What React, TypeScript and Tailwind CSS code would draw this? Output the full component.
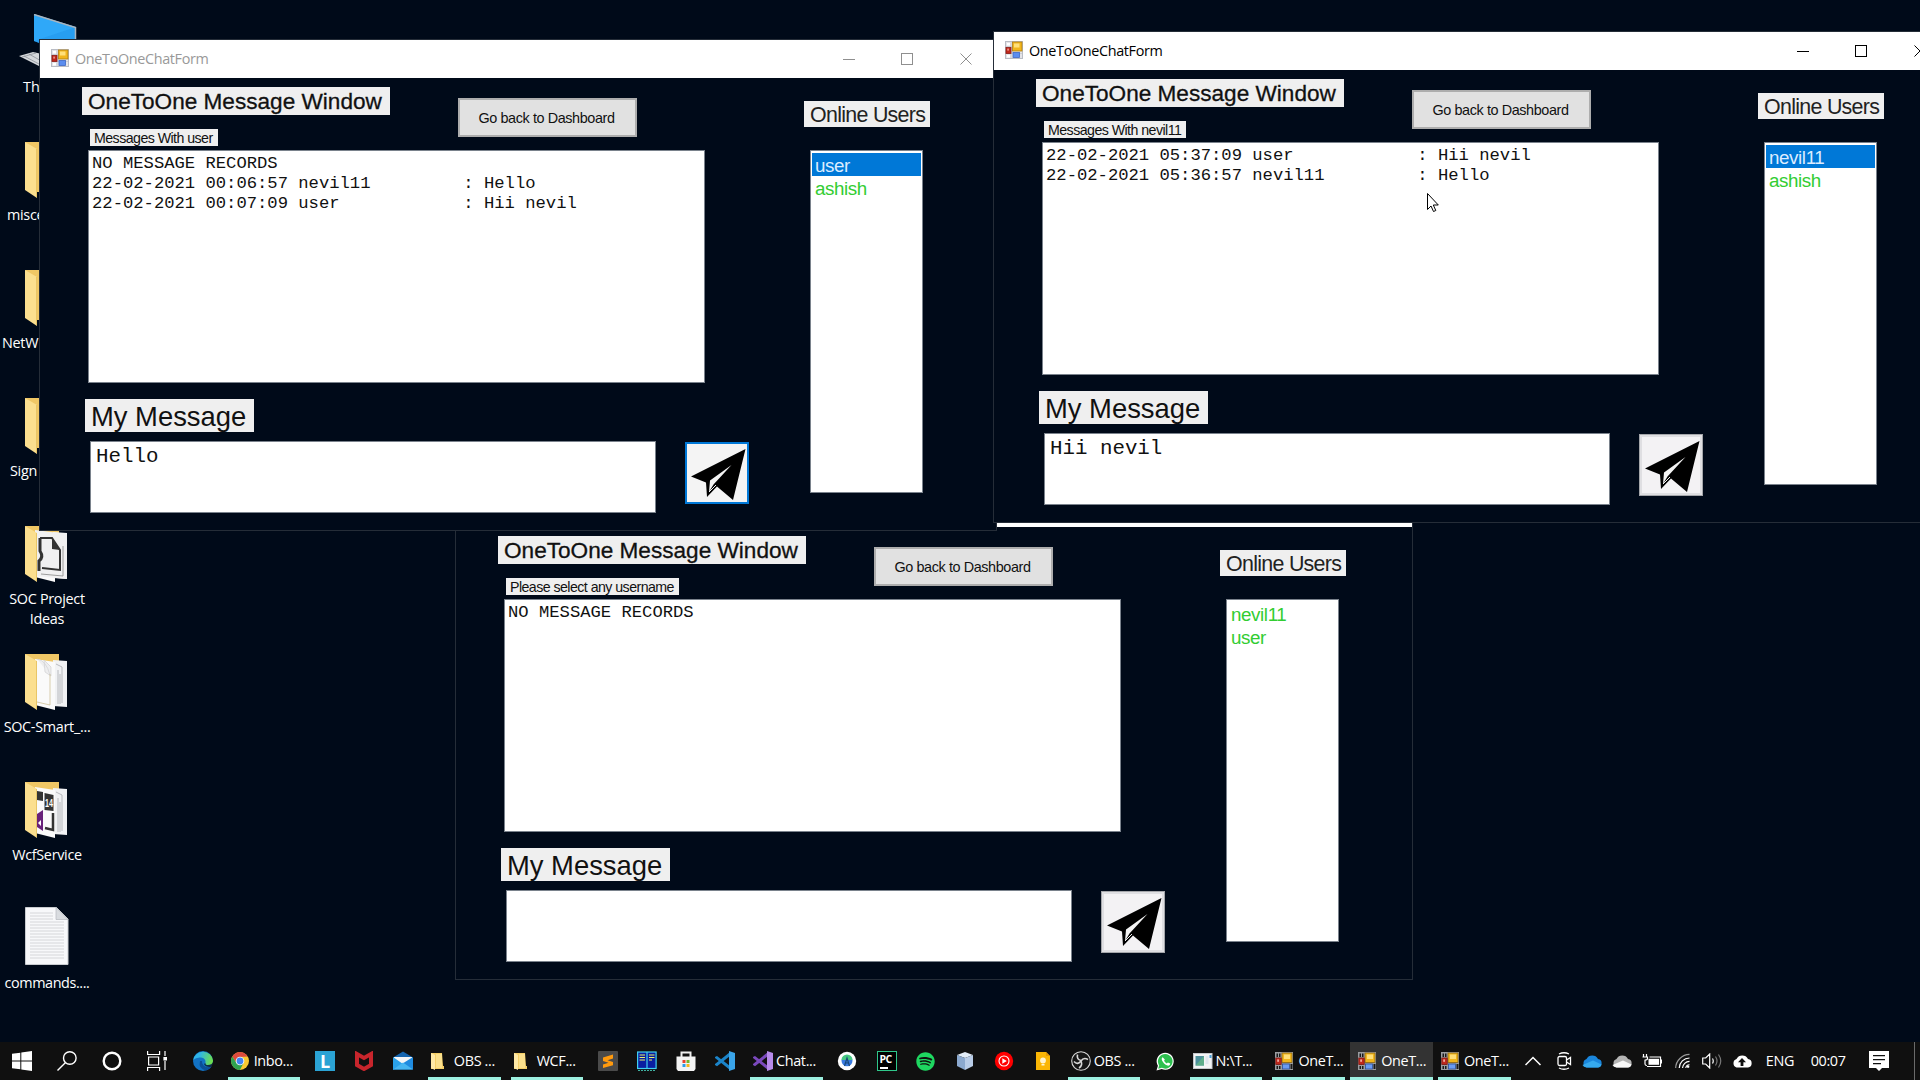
import React from "react";
import { FaSpotify } from "react-icons/fa";

type Row = { stamp: string; name: string; text: string };

function FormIcon({ className = "" }: { className?: string }) {
  return (
    <svg viewBox="0 0 18 18" className={"h-[18px] w-[18px] shrink-0 " + className}>
      <rect x="0.5" y="0.5" width="17" height="17" fill="#e4e4e8" stroke="#b9bcc4" />
      <path d="M6 1v16M1 5.5h16M1 12.5h16" stroke="#c4c7ce" strokeWidth="0.8" />
      <rect x="7.5" y="1" width="9.5" height="9" fill="#f1b51c" stroke="#b07d12" strokeWidth="0.8" />
      <rect x="9" y="2.5" width="5.5" height="4" fill="#ffe07a" />
      <rect x="1" y="6.5" width="5" height="6" fill="#c0281c" stroke="#8c1a14" strokeWidth="0.8" />
      <rect x="2.2" y="7.6" width="1.8" height="2" fill="#e98d80" />
      <rect x="8" y="11.5" width="6.5" height="5" fill="#5b8def" stroke="#3d68c4" strokeWidth="0.8" />
      <path d="M2 2h3v2.5H2zM2 14h3v2.5H2z" fill="#fff" />
    </svg>
  );
}

function TaskFormIcon() {
  return (
    <svg viewBox="0 0 18 18" className="h-[18px] w-[18px] shrink-0">
      <rect width="18" height="18" fill="#9a9ca0" />
      <path d="M1.5 1.5h4v3.5h-4zM1.5 14h4v3h-4zM15.5 12h2v5h-2z" fill="#1a1a1a" />
      <path d="M3.5 1v4M3.5 13.5V17" stroke="#9a9ca0" />
      <rect x="7" y="1" width="10" height="9.5" fill="#f1b51c" stroke="#8a6410" strokeWidth="0.8" />
      <rect x="9" y="2.5" width="6" height="4.5" fill="#ffdf78" />
      <rect x="0.8" y="6" width="5.4" height="6.5" fill="#c0281c" stroke="#7a1510" strokeWidth="0.8" />
      <rect x="2.2" y="7.4" width="1.8" height="2.4" fill="#f0a89d" />
      <rect x="7.5" y="12" width="7" height="5" fill="#6b9bf2" stroke="#2d4f96" strokeWidth="0.8" />
    </svg>
  );
}

function ChatWindow({
  place,
  active,
  subtitle,
  records,
  rows,
  users,
  selected,
  draft,
  focused,
}: {
  place: string;
  active: boolean;
  subtitle: string;
  records: boolean;
  rows: Row[];
  users: string[];
  selected?: string;
  draft: string;
  focused?: boolean;
}) {
  const ink = active ? "#000000" : "#8f8f8f";
  return (
    <section
      className={
        "absolute h-[492px] w-[958px] border border-[#252d38] bg-[#000a19] font-['Liberation_Sans',sans-serif] text-[#111] " +
        place
      }
    >
      <header className="flex h-[38px] items-center bg-white pl-[11px]">
        <FormIcon className="-mt-0.5" />
        <span
          className={
            "-mt-px ml-[6px] w-[134px] whitespace-nowrap font-['Open_Sans',sans-serif] text-[14.4px] leading-5 tracking-[-0.35px] " +
            (active ? "text-black" : "text-[#999]")
          }
        >
          OneToOneChatForm
        </span>
        <svg className="ml-[634px] h-3 w-[130px] shrink-0" viewBox="0 0 130 12" fill="none" stroke={ink} shapeRendering="crispEdges">
          <path d="M0 6h12" />
          <rect x="58.5" y="0.5" width="11" height="11" />
          <path d="M117.500 0.500l11 11M128.500 0.500l-11 11" shapeRendering="auto" />
        </svg>
      </header>
      <div className="flex">
        <div className="w-[708px] shrink-0 pt-[9px]">
          <div className="flex h-[42px] items-start pl-[42px]">
            <h1 className="h-[28px] w-[308px] whitespace-nowrap bg-[#efefef] pl-[6px] text-[22.6px] leading-[30px] [-webkit-text-stroke:0.3px_#111]">
              OneToOne Message Window
            </h1>
            <button className="ml-[68px] mt-[11px] h-[39px] w-[179px] whitespace-nowrap border-2 border-[#adadad] bg-[#e1e1e1] pr-[2px] text-[14.4px] leading-4 tracking-[-0.4px]">
              Go back to Dashboard
            </button>
          </div>
          <p className="ml-[50px] h-[17px] w-fit whitespace-nowrap bg-[#efefef] pl-[4px] pr-[5px] text-[14.2px] leading-[18px] tracking-[-0.55px]">
            {subtitle}
          </p>
          <div className="ml-[48px] mt-[4px] h-[233px] w-[617px] whitespace-pre border border-[#7a828c] bg-white pl-[3px] pt-[3px] font-['Liberation_Mono',monospace] text-[17.2px] leading-[20px]">
            {records && <p>NO MESSAGE RECORDS</p>}
            {rows.map((r) => (
              <p key={r.stamp}>{(r.stamp + " " + r.name).padEnd(36) + ": " + r.text}</p>
            ))}
          </div>
          <h2 className="ml-[45px] mt-[16px] h-[33px] w-[169px] whitespace-nowrap bg-[#efefef] pl-[6px] text-[27.4px] leading-[35px]">
            My Message
          </h2>
          <div className="mt-[9px] flex pl-[50px]">
            <div className="h-[72px] w-[566px] shrink-0 border border-[#7a828c] bg-white pl-[5px] pt-[3px] font-['Liberation_Mono',monospace] text-[20.8px] leading-[24px]">
              {draft}
            </div>
            <button
              className={
                "ml-[29px] mt-px h-[62px] w-[64px] shrink-0 " +
                (focused
                  ? "border-2 border-[#0078d7] bg-[#f4f4f4]"
                  : "border border-[#a4a6aa] bg-[#f3f2f4] shadow-[inset_0_0_0_2px_#dfdfe2]")
              }
            >
              <svg
                viewBox="0 0 64 62"
                className={focused ? "-m-[2px] h-[62px] w-[64px] max-w-none" : "-m-px h-[62px] w-[64px] max-w-none"}
              >
                <path d="M60.5 7L6 34.5 21 40.5 22 55 32 44.5 48 58z" fill="#000" />
                <path d="M46.5 23L25 38.5 24 50 28.5 42.5z" fill="#f3f3f3" />
                <path d="M24 50L31 43" stroke="#f3f3f3" strokeWidth="1" />
              </svg>
            </button>
          </div>
        </div>
        <div className="pl-[56px] pt-[23px]">
          <h3 className="h-[26px] w-[126px] whitespace-nowrap bg-[#efefef] pl-[6px] text-[21.4px] leading-[28px] tracking-[-0.7px] text-[#222]">
            Online Users
          </h3>
          <ul className="ml-[6px] mt-[23px] h-[343px] w-[113px] border border-[#7a828c] bg-white px-px py-[2px] text-[18.8px] leading-[25px] tracking-[-0.4px]">
            {users.map((u) => (
              <li
                key={u}
                className={
                  "h-[23px] pl-[3px] " + (u === selected ? "bg-[#0078d7] text-[#dcecff]" : "text-[#32cd32]")
                }
              >
                {u}
              </li>
            ))}
          </ul>
        </div>
      </div>
    </section>
  );
}

function Folder({ kind }: { kind: string }) {
  return (
    <svg viewBox="0 0 44 58" className="h-[58px] w-[44px]">
      <path d="M0 0h34v50H12z" fill="#f0c765" />
      {kind !== "plain" && (
        <>
          <path d="M28 6l14 1v46l-14-1z" fill="#f1f2f4" />
          <path d="M31 10l6 3v36M33 16v34M35 20v30" stroke="#a9abb0" fill="none" strokeWidth="0.8" />
          <path d="M10 5l20 3v48L10 51z" fill="#fafafa" />
        </>
      )}
      {kind === "pages" && (
        <>
          <path d="M12 5q9 1 13 16M19 6l7 7v9l-6-4z" fill="#eeeeef" stroke="#d0d0d2" strokeWidth="0.7" />
          <path d="M12 48l13 3V20" fill="none" stroke="#c8b98a" strokeWidth="0.7" />
        </>
      )}
      {kind === "ideas" && (
        <>
          <path d="M10 4l32 4v45l-32-3z" fill="#f0f0f1" />
          <path d="M15 12h12l8 12v20l-18-2" fill="none" stroke="#333" strokeWidth="2" />
          <path d="M27 12v11l8 1z" fill="#333" />
          <path d="M15 12v13q4 6-1 10v10" fill="none" stroke="#333" strokeWidth="3" />
          <path d="M16 48l22 2V20" fill="none" stroke="#888" strokeWidth="0.8" />
        </>
      )}
      {kind === "wcf" && (
        <>
          <path d="M12 9l6 1v9l-6-1z" fill="#333" />
          <path d="M19.500 11l9 2v16l-9-1z" fill="#333" />
          <text x="20" y="25" fontSize="11" fontWeight="700" fill="#fff" fontFamily="Liberation Sans" textLength="8" lengthAdjust="spacingAndGlyphs">14</text>
          <path d="M28 31v17l-8-2" fill="none" stroke="#333" strokeWidth="2.5" />
          <path d="M12 32l6-4v21l-6-4z" fill="#68217a" />
          <path d="M13 41l3-3v6z" fill="#fff" />
        </>
      )}
      <path d="M0 0l12 7v49L0 48z" fill="#fbdf8f" />
      <path d="M11.500 7v48" stroke="#e8c566" strokeWidth="1" />
    </svg>
  );
}

function DesktopItem({ label, kind, clip }: { label: string; kind: string; clip?: string }) {
  return (
    <li className="flex h-[128px] w-[94px] flex-col">
      <div className="flex h-[63px] items-start pl-[25px]">
        <Folder kind={kind} />
      </div>
      <span className={"text-[14.4px] leading-5 tracking-[-0.3px] " + (clip ?? "text-center")}>{label}</span>
    </li>
  );
}

function Task({ icon, label, active }: { icon: React.ReactNode; label: string; active?: boolean }) {
  return (
    <div className={"flex h-full w-[82.800px] shrink-0 flex-col px-[5px] " + (active ? "bg-[#333]" : "")}>
      <div className="flex h-[35px] items-center pl-[3px] pt-[3px]">
        <span className="flex w-5 shrink-0 items-center">{icon}</span>
        <span className="ml-[3px] whitespace-nowrap text-[14.4px] leading-5 tracking-[-0.35px]">{label}</span>
      </div>
      <div className={"h-[3px] bg-[#9df0e0] " + (active ? "-mx-[5px]" : "")} />
    </div>
  );
}

function Cell({ children, wide }: { children: React.ReactNode; wide?: boolean }) {
  return (
    <div className={"flex h-full shrink-0 items-center justify-center " + (wide ? "w-[45px]" : "w-[39.150px]")}>
      {children}
    </div>
  );
}

const I = "h-5 w-5";

const VsShape = ({ dark, light }: { dark: string; light: string }) => (
  <svg viewBox="0 0 20 20" className={I}>
    <path d="M0 6l2-1 13 10v4L0 7z" fill={dark} />
    <path d="M0 14l2 1.200L15 5V1L0 13z" fill={dark} />
    <path d="M14 0l6 2v16l-6 2z" fill={light} />
  </svg>
);

const FolderSmall = () => (
  <svg viewBox="0 0 20 20" className={I}>
    <path d="M0 2h11l1 13h1v3H0z" fill="#f5cf67" />
    <path d="M0 2l4 2v15l-4-2z" fill="#ffe9a6" />
    <path d="M5 3h6v14H5z" fill="#fbe08c" />
  </svg>
);

function Taskbar() {
  return (
    <footer className="absolute inset-x-0 bottom-0 flex h-[38px] items-center bg-[#101010] text-white">
      <div className="-ml-px flex">
        <Cell wide>
          <svg viewBox="0 0 20 20" className={I} fill="#fff">
            <path d="M0 2.800L8.300 1.700v7.800H0zM9.300 1.500L20 0v9.500H9.300zM0 10.500h8.300v7.800L0 17.200zM9.300 10.500H20V20L9.300 18.500z" />
          </svg>
        </Cell>
        <Cell wide>
          <svg viewBox="0 0 20 20" className={I} fill="none" stroke="#fff" strokeWidth="1.400">
            <circle cx="12.800" cy="7" r="6.300" />
            <path d="M8.300 11.700L0.500 19.500" />
          </svg>
        </Cell>
        <Cell wide>
          <svg viewBox="0 0 20 20" className={I} fill="none" stroke="#fff" strokeWidth="2.400">
            <circle cx="10" cy="10" r="8.300" />
          </svg>
        </Cell>
        <Cell wide>
          <svg viewBox="0 0 20 20" className={I} fill="none" stroke="#fff" strokeWidth="1.200">
            <path d="M0.600 0v3.500h12V0M0.600 20v-3.500h12V20M1.600 6h10v8h-10zM18 0v5M18 10v9" />
            <path d="M17 6.500h2.500v2.500H17z" fill="#fff" />
          </svg>
        </Cell>
      </div>
      <div className="ml-[4.500px] flex">
        <Cell>
          <svg viewBox="0 0 20 20" className={I}>
            <defs>
              <linearGradient id="edge" x1="0" y1="0.300" x2="1" y2="0.500">
                <stop offset="0.300" stopColor="#2fb5e8" />
                <stop offset="1" stopColor="#6fe04a" />
              </linearGradient>
            </defs>
            <circle cx="10" cy="10" r="10" fill="#1272c4" />
            <path d="M0.200 9A10 10 0 0 1 20 9.500Q20 14 15 14q-3 0-2.500-2Q13 7 8 6.500 3 6 0.200 9z" fill="url(#edge)" />
            <path d="M7 10q-2 8 6 9.500 4-1 6-4.500-5 2.500-8.500-.5Q8.500 12.500 9 10z" fill="#0c4f96" />
            <path d="M12.500 12q-.5 2 2.500 2 4 0 5-3v4l-3 1q-5 0-6-3z" fill="#101010" opacity=".7" />
          </svg>
        </Cell>
      </div>
      <Task
        label="Inbo..."
        icon={
          <svg viewBox="0 0 20 20" className="h-[18px] w-[18px]">
            <circle cx="10" cy="10" r="10" fill="#f9c932" />
            <path d="M1.340 5A10 10 0 0 1 18.660 5L10 5.500 6 12z" fill="#dd4b3e" />
            <path d="M1.340 5A10 10 0 0 0 10 20l4-8-8 0z" fill="#30a350" />
            <circle cx="10" cy="10" r="4.800" fill="#fff" />
            <circle cx="10" cy="10" r="3.800" fill="#4285f4" />
          </svg>
        }
      />
      <Cell>
        <div className="flex h-5 w-5 items-center justify-center bg-[#2ba3d4] text-[18px] font-bold leading-none text-white">L</div>
      </Cell>
      <Cell>
        <svg viewBox="0 0 20 20" className={I}>
          <path d="M3 3v11l7 4 7-4V3l-7 4z" fill="none" stroke="#c8252c" strokeWidth="4" />
        </svg>
      </Cell>
      <Cell>
        <svg viewBox="0 0 20 20" className={I}>
          <path d="M0 6.500L10 0.500l10 6z" fill="#1565b0" />
          <path d="M1 6h18v8H1z" fill="#f4f6f8" />
          <path d="M0 6l10 7L0 19z" fill="#2aa1ea" />
          <path d="M20 6L0 18.500h20z" fill="#1f8be0" />
          <path d="M0 18.500L10 11.500l10 7z" fill="#46b6f2" />
        </svg>
      </Cell>
      <Task label="OBS ..." icon={<FolderSmall />} />
      <Task label="WCF..." icon={<FolderSmall />} />
      <Cell>
        <svg viewBox="0 0 20 20" className={I}>
          <rect width="20" height="20" rx="1" fill="#4a4a4a" />
          <path d="M15 3.500v4L9.500 9.200 15 11v3.300L5 17v-3.500l5.500-1.800L5 10V6.500z" fill="#ff9a0e" />
        </svg>
      </Cell>
      <Cell>
        <svg viewBox="0 0 20 20" className={I}>
          <rect x="0.600" y="1" width="18.500" height="16.500" fill="#0a1ea0" stroke="#3fd0f0" strokeWidth="1.200" />
          <path d="M10 1v16.500" stroke="#3fd0f0" strokeWidth="1.200" />
          <path d="M2.500 4h5.500M2.500 6.500h5.500M2.500 9h5.500M12 4h5.500M12 6.500h5.500M12 9h3" stroke="#e8f06a" />
          <path d="M1 19.500h18" stroke="#3fb0a0" strokeDasharray="2 1" />
        </svg>
      </Cell>
      <Cell>
        <svg viewBox="0 0 20 20" className={I}>
          <path d="M5.500 6V1.500h9V6" fill="none" stroke="#eee" strokeWidth="2" />
          <path d="M0.500 5.500h19V18l-1.500 2H2l-1.500-2z" fill="#f3f3f3" />
          <path d="M6.500 9h3v3h-3z" fill="#e8412f" />
          <path d="M10.500 9h3v3h-3z" fill="#6fb52c" />
          <path d="M6.500 13h3v3h-3z" fill="#2a9be8" />
          <path d="M10.500 13h3v3h-3z" fill="#f6b61a" />
        </svg>
      </Cell>
      <Cell>
        <VsShape dark="#1b84c9" light="#3aa5ea" />
      </Cell>
      <Task label="Chat..." icon={<VsShape dark="#7b49bd" light="#b78bea" />} />
      <Cell>
        <svg viewBox="0 0 20 20" className={I}>
          <circle cx="10" cy="10" r="9.200" fill="#fff" />
          <circle cx="10" cy="9.800" r="5.500" fill="#3a7be0" />
          <path d="M4.500 9a5.500 5.500 0 0 1 11 0z" fill="#47c983" />
          <path d="M7.500 15l2.500-8 2.500 8M8 12h4" fill="none" stroke="#1a4a7a" strokeWidth="1.200" />
        </svg>
      </Cell>
      <Cell>
        <div className="h-5 w-5 border border-[#2fc78a] bg-black pl-[2px] pt-[1px]">
          <div className="text-[10.500px] font-bold leading-[12px] tracking-[-0.5px]">PC</div>
          <div className="mt-[2px] h-[1.500px] w-2 bg-white" />
        </div>
      </Cell>
      <Cell>
        <FaSpotify className="h-[19px] w-[19px] text-[#1ed760]" />
      </Cell>
      <Cell>
        <svg viewBox="0 0 20 20" className={I}>
          <path d="M2 4l8-3 8 3-8 3z" fill="#e3edf8" />
          <path d="M2 4l8 3v12l-8-4z" fill="#8ba9cf" />
          <path d="M18 4l-8 3v12l8-4z" fill="#b9cde8" />
        </svg>
      </Cell>
      <Cell>
        <svg viewBox="0 0 20 20" className={I}>
          <circle cx="10" cy="10" r="9.200" fill="#f00" />
          <circle cx="10" cy="10" r="5" fill="none" stroke="#fff" strokeWidth="1.100" />
          <path d="M8.300 7.300v5.400L12.800 10z" fill="#fff" />
        </svg>
      </Cell>
      <Cell>
        <svg viewBox="0 0 20 20" className={I}>
          <path d="M3 1h10l4 4v14H3z" fill="#fbb605" />
          <path d="M13 1v4h4z" fill="#e79a06" />
          <circle cx="10" cy="9.500" r="2.900" fill="#fff4d0" />
          <path d="M8.500 13h3v1.500h-3z" fill="#fff4d0" />
        </svg>
      </Cell>
      <Task
        label="OBS ..."
        icon={
          <svg viewBox="0 0 20 20" className={I} fill="none" stroke="#d8d8d8">
            <circle cx="10" cy="10" r="9.300" fill="#161616" strokeWidth="1.100" />
            <path d="M6.500 3.500q-1 5 3.500 6M17 8.500q-4.500-2.500-7 1.500M8 17q4-2.500 2-7M3 10.500q3.500 4 7-.5" strokeWidth="1.600" />
          </svg>
        }
      />
      <Cell>
        <svg viewBox="0 0 20 20" className="h-[19px] w-[19px]">
          <path d="M0.500 19.500L2 14.500A9 9 0 1 1 6 18z" fill="#fff" />
          <path d="M2.300 17.700l1-3.600A7.700 7.700 0 1 1 6.200 16.700z" fill="#2dc04f" />
          <path d="M7 5.500q-2 1.500 0 4.500 2.500 4 6 4.500 2-.5 2-2.500l-2.500-1-1.200 1.200Q9.300 11 8.500 9.300L9.300 8z" fill="#fff" />
        </svg>
      </Cell>
      <Task
        label="N:\T..."
        icon={
          <svg viewBox="0 0 20 20" className={I}>
            <rect x="0.500" y="2.500" width="18.500" height="15" fill="#f3f4f5" stroke="#c5c8cc" />
            <rect x="2.500" y="5" width="8.500" height="9.500" fill="#4c8f9c" />
            <path d="M2.500 14.500L11 5v9.500z" fill="#5fae8a" />
            <path d="M12.500 5h3v8h-3z" fill="#dfe6ee" />
            <path d="M16.500 4h2v3h-2z" fill="#4aa0d8" />
          </svg>
        }
      />
      <Task label="OneT..." icon={<TaskFormIcon />} />
      <Task label="OneT..." icon={<TaskFormIcon />} active />
      <Task label="OneT..." icon={<TaskFormIcon />} />
      <div className="flex items-center pl-[9px]">
        <svg viewBox="0 0 16 10" className="h-[10px] w-4" fill="none" stroke="#fff" strokeWidth="1.500">
          <path d="M0.500 9L8 1.500 15.500 9" />
        </svg>
        <svg viewBox="0 0 16 18" className="ml-[15px] h-[18px] w-4" fill="none" stroke="#fff" strokeWidth="1.300">
          <rect x="2" y="4.500" width="8.500" height="9" rx="1.500" />
          <path d="M10.500 8L14.500 5.500v7L10.500 10M3 2Q8-.5 13 2M3 16q5 2.500 10 0" />
        </svg>
        <svg viewBox="0 0 20 14" className="ml-[10px] h-[14px] w-5">
          <path d="M4.500 13.500a4.500 4.500 0 0 1 0-8.500A6.500 6.500 0 0 1 16 5a4.300 4.300 0 0 1 0 8.500z" fill="#1a86dc" />
          <path d="M4.500 13.500q-3-.5-4-2.500L11 6.500l8.500 4q-1 3-3.500 3z" fill="#35a9ee" />
        </svg>
        <svg viewBox="0 0 20 14" className="ml-[10px] h-[14px] w-5">
          <path d="M4.500 13.500a4.500 4.500 0 0 1 0-8.500A6.500 6.500 0 0 1 16 5a4.300 4.300 0 0 1 0 8.500z" fill="#b4b4b4" />
          <path d="M4.500 13.500q-3-.5-4-2.500L11 6.500l8.500 4q-1 3-3.500 3z" fill="#f8f8f8" />
        </svg>
        <svg viewBox="0 0 20 14" className="ml-[10px] h-[14px] w-5" fill="none" stroke="#fff" strokeWidth="1.200">
          <path d="M1.500 0v2.500M4.500 0v2.500M0.500 3h5v1.500Q5.500 6 3 6.200V10q0 1.500 2 1.500" />
          <path d="M7.500 3H18.500v9.500H5M19.500 5.500v4" />
          <rect x="6.500" y="4.800" width="10.500" height="6" fill="#fff" stroke="none" />
        </svg>
        <svg viewBox="0 0 16 16" className="ml-[13px] h-4 w-[15px]" fill="none" stroke="#fff" strokeWidth="1.300">
          <path d="M0.700 15.500A15 15 0 0 1 15.500 1" stroke="#999" />
          <path d="M4.500 15.500A11 11 0 0 1 15.500 4.800M8 15.500a7.500 7.500 0 0 1 7.500-7" />
          <path d="M11.500 15.500a4 4 0 0 1 4-3.500" />
          <circle cx="14" cy="14" r="1.300" fill="#fff" stroke="none" />
        </svg>
        <svg viewBox="0 0 20 16" className="ml-[12px] h-4 w-5" fill="none" stroke="#fff" strokeWidth="1.200">
          <path d="M0.700 5h3l4-4v14l-4-4h-3zM10.500 5.500q1.500 2.500 0 5" />
          <path d="M13.500 3.500q3 4.500 0 9M16.500 1.500q4.500 6.500 0 13" stroke="#777" />
        </svg>
        <svg viewBox="0 0 20 14" className="ml-[10px] h-[14px] w-5">
          <path d="M4.500 13.500a4.500 4.500 0 0 1 0-8.500A6.500 6.500 0 0 1 16 5a4.300 4.300 0 0 1 0 8.500z" fill="#fff" />
          <path d="M10 4l4 4.200h-2.600V12H8.600V8.200H6z" fill="#101010" />
        </svg>
        <span className="ml-[14px] w-[32px] whitespace-nowrap text-[14.4px] tracking-[-0.3px]">ENG</span>
        <span className="ml-[13px] w-[36px] whitespace-nowrap text-[14.4px] tracking-[-0.4px]">00:07</span>
        <svg viewBox="0 0 20 20" className="ml-[22px] h-5 w-5">
          <path d="M0 0h20v17h-7l-3 3-3-3H0z" fill="#fff" />
          <path d="M4 4.700h12M4 8.700h12M4 12.700h8" stroke="#101010" strokeWidth="1.200" />
        </svg>
      </div>
      <div className="ml-[25px] h-full w-px shrink-0 bg-[#6a6a6a]" />
    </footer>
  );
}

export default function App() {
  return (
    <main className="relative h-[1080px] w-[1920px] overflow-hidden bg-[#000a19] font-['Open_Sans',sans-serif] text-white">
      <ul className="absolute left-0 top-[14px] w-[94px]">
        <li className="h-[128px] w-[94px]">
          <svg viewBox="0 0 60 64" className="-mb-px ml-[19px] h-[64px] w-[60px]">
            <path d="M15 0l42 13v30L15 27z" fill="#2fa8f8" />
            <path d="M15 27L57 13v30z" fill="#1f93ea" opacity=".5" />
            <path d="M15 0.500l41.500 13V43" fill="none" stroke="#aab4bd" strokeWidth="1.500" />
            <path d="M0 42l14-4 18 4v10l-12 0z" fill="#d6d9dc" />
            <path d="M5 42l15 8M10 40l14 8M3 43l14-4" stroke="#8b9198" strokeWidth="0.800" />
          </svg>
          <span className="block pl-[23px] text-[14.400px] leading-5">Th</span>
        </li>
        <DesktopItem label="misce" kind="plain" clip="pl-[7px]" />
        <DesktopItem label="NetW" kind="plain" clip="pl-[2px]" />
        <DesktopItem label="Sign" kind="plain" clip="pl-[10px]" />
        <DesktopItem label="SOC Project Ideas" kind="ideas" clip="text-center" />
        <DesktopItem label="SOC-Smart_..." kind="pages" />
        <DesktopItem label="WcfService" kind="wcf" />
        <li className="flex h-[128px] w-[94px] flex-col">
          <svg viewBox="0 0 44 58" className="-mt-[3px] mb-[8px] ml-[25px] h-[58px] w-[44px] shrink-0">
            <path d="M0.500 0.500h31L43 12v45.500H0.500z" fill="#f7f8fa" stroke="#c9ccd0" />
            <path d="M31 0.500V12.500h12z" fill="#d9dce0" stroke="#b4b8bd" strokeWidth="0.700" />
            <path
              d="M5 6h23M5 9h23M5 12h23M5 15h34M5 18h34M5 21h34M5 24h34M5 27h34M5 30h34M5 33h34M5 36h34M5 39h34M5 42h34M5 45h34M5 48h34M5 51h34"
              stroke="#d0d2d6"
              strokeWidth="0.900"
            />
          </svg>
          <span className="text-center text-[14.400px] leading-5 tracking-[-0.4px]">commands....</span>
        </li>
      </ul>

      <ChatWindow
        place="left-[455px] top-[488px]"
        active={false}
        subtitle="Please select any username"
        records
        rows={[]}
        users={["nevil11", "user"]}
        draft=""
      />
      <ChatWindow
        place="left-[39px] top-[39px]"
        active={false}
        subtitle="Messages With user"
        records
        rows={[
          { stamp: "22-02-2021 00:06:57", name: "nevil11", text: "Hello" },
          { stamp: "22-02-2021 00:07:09", name: "user", text: "Hii nevil" },
        ]}
        users={["user", "ashish"]}
        selected="user"
        draft="Hello"
        focused
      />
      <ChatWindow
        place="left-[993px] top-[31px]"
        active
        subtitle="Messages With nevil11"
        records={false}
        rows={[
          { stamp: "22-02-2021 05:37:09", name: "user", text: "Hii nevil" },
          { stamp: "22-02-2021 05:36:57", name: "nevil11", text: "Hello" },
        ]}
        users={["nevil11", "ashish"]}
        selected="nevil11"
        draft="Hii nevil"
      />

      <svg viewBox="0 0 12 19" className="absolute left-[1427px] top-[193px] h-[19px] w-3">
        <path
          d="M0.500 0.500v16L4 13l2.500 5.500 2.300-1L6.300 12h5z"
          fill="#fff"
          stroke="#000"
          strokeWidth="1"
        />
      </svg>

      <Taskbar />
    </main>
  );
}
